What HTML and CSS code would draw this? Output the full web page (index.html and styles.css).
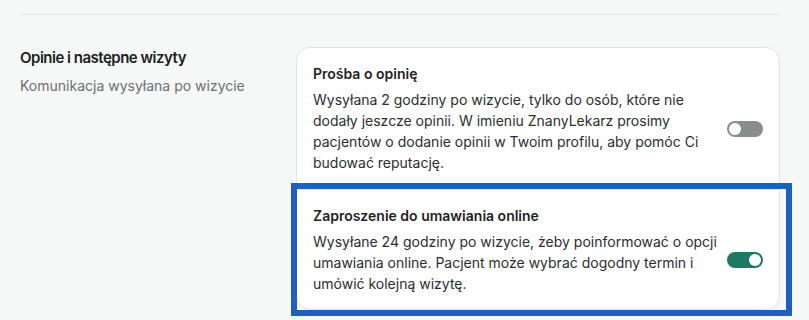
FILE: index.html
```html
<!DOCTYPE html>
<html lang="pl">
<head>
  <meta charset="utf-8">
  <title>Opinie i następne wizyty</title>
  <link rel="stylesheet" href="styles.css">
</head>
<body>
  <div class="page">
    <hr class="sep">

    <div class="setting">
      <div class="setting-info">
        <h2>Opinie i następne wizyty</h2>
        <p>Komunikacja wysyłana po wizycie</p>
      </div>

      <div class="card">
        <div class="option">
          <div class="option-text">
            <h3>Prośba o opinię</h3>
            <p>Wysyłana 2 godziny po wizycie, tylko do osób, które nie dodały jeszcze opinii. W imieniu ZnanyLekarz prosimy pacjentów o dodanie opinii w Twoim profilu, aby pomóc Ci budować reputację.</p>
          </div>
          <span class="toggle"></span>
        </div>

        <div class="option highlight">
          <div class="option-text">
            <h3>Zaproszenie do umawiania online</h3>
            <p>Wysyłane 24 godziny po wizycie, żeby poinformować o opcji umawiania online. Pacjent może wybrać dogodny termin i umówić kolejną wizytę.</p>
          </div>
          <span class="toggle on"></span>
        </div>
      </div>
    </div>
  </div>
</body>
</html>
```

FILE: styles.css
```css
body{
    margin:0;
    background:#f6f7f7;
    font-family:Inter, "Noto Sans", sans-serif;
    color:#1f2326;
}
.page{
    width:760px;
    margin-left:20px;
    padding:14px 0 11px;
}
.sep{
    margin:0;
    border:0;
    height:1px;
    background:#e2e4e4;
}
.setting{
    display:grid;
    grid-template-columns:276px 1fr;
    margin-top:32px;
}
.setting-info h2{
    margin:0;
    font-size:15px;
    line-height:22px;
    font-weight:600;
    letter-spacing:-0.5px;
    color:#1b1e21;
}
.setting-info p{
    margin:7px 0 0;
    font-size:14px;
    line-height:20px;
    color:#6b7074;
}

/* card with the two options */
.card{
    background:#fff;
    border:1px solid #e1e3e3;
    border-radius:14px;
}
.option{
    position:relative;
    display:flex;
    align-items:center;
    gap:4px;
    padding:16px;
}
.option + .option{
    border-top:1px solid #e1e3e3;
    padding-bottom:15px;
}
.option-text{
    flex:1;
}
.option h3{
    margin:0 0 5px;
    font-size:14px;
    line-height:20px;
    font-weight:600;
    color:#1f2326;
}
.option p{
    margin:0;
    font-size:14px;
    line-height:21px;
    color:#2a2e31;
}

/* switch */
.toggle{
    position:relative;
    flex:none;
    width:36px;
    height:16px;
    margin-top:20px;
    border-radius:8px;
    background:#898e8c;
}
.toggle:after{
    content:"";
    position:absolute;
    top:2px;
    left:2px;
    width:12px;
    height:12px;
    border-radius:50%;
    background:#fff;
}
.toggle.on{background:#1e7963}
.toggle.on:after{left:22px}

/* blue annotation frame */
.highlight:after{
    content:"";
    position:absolute;
    top:-7px;
    right:-13px;
    bottom:-7px;
    left:-6px;
    border:6px solid #1f5fbf;
    pointer-events:none;
}
```
